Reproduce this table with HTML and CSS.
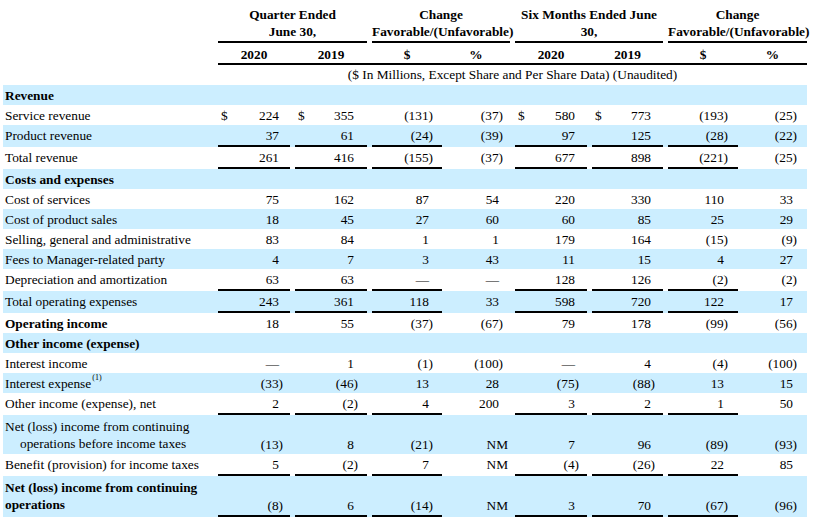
FILE: index.html
```html
<!DOCTYPE html>
<html lang="en">
<head>
<meta charset="utf-8">
<title>Results of Operations</title>
<link rel="stylesheet" href="styles.css">
</head>
<body>
<div class="wrap">
<table class="fin">
  <colgroup>
    <col class="w-lbl"><col class="w-a"><col class="w-b"><col class="w-c"><col class="w-d"><col class="w-e"><col class="w-f"><col class="w-g"><col class="w-h">
  </colgroup>
  <thead>
    <tr class="h1">
      <th class="lbl"></th>
      <th colspan="2" class="grp gap">Quarter Ended<br>June 30,</th>
      <th colspan="2" class="grp gap">Change<br>Favorable/(Unfavorable)</th>
      <th colspan="2" class="grp gap">Six Months Ended June<br>30,</th>
      <th colspan="2" class="grp">Change<br>Favorable/(Unfavorable)</th>
    </tr>
    <tr class="h2">
      <th class="lbl"></th>
      <th class="yr gap">2020</th>
      <th class="yr gap">2019</th>
      <th class="yr">$</th>
      <th class="yr gap">%</th>
      <th class="yr gap">2020</th>
      <th class="yr gap">2019</th>
      <th class="yr">$</th>
      <th class="yr">%</th>
    </tr>
    <tr class="h3">
      <th class="lbl"></th>
      <th colspan="8" class="sub">($ In Millions, Except Share and Per Share Data) (Unaudited)</th>
    </tr>
  </thead>
  <tbody>
    <tr class="s"><td class="lbl b">Revenue</td><td></td><td></td><td></td><td></td><td></td><td></td><td></td><td></td></tr>
    <tr><td class="lbl">Service revenue</td><td><span class="cur">$</span>224</td><td><span class="cur">$</span>355</td><td class="ng">(131)</td><td class="ng">(37)</td><td><span class="cur">$</span>580</td><td><span class="cur">$</span>773</td><td class="ng">(193)</td><td class="ng">(25)</td></tr>
    <tr class="s ul"><td class="lbl">Product revenue</td><td class="u">37</td><td class="u">61</td><td class="u ng">(24)</td><td class="ng">(39)</td><td class="u">97</td><td class="u">125</td><td class="u ng">(28)</td><td class="ng">(22)</td></tr>
    <tr class="ul"><td class="lbl">Total revenue</td><td class="u">261</td><td class="u">416</td><td class="u ng">(155)</td><td class="ng">(37)</td><td class="u">677</td><td class="u">898</td><td class="u ng">(221)</td><td class="ng">(25)</td></tr>
    <tr class="s"><td class="lbl b">Costs and expenses</td><td></td><td></td><td></td><td></td><td></td><td></td><td></td><td></td></tr>
    <tr><td class="lbl">Cost of services</td><td>75</td><td>162</td><td>87</td><td>54</td><td>220</td><td>330</td><td>110</td><td>33</td></tr>
    <tr class="s"><td class="lbl">Cost of product sales</td><td>18</td><td>45</td><td>27</td><td>60</td><td>60</td><td>85</td><td>25</td><td>29</td></tr>
    <tr><td class="lbl">Selling, general and administrative</td><td>83</td><td>84</td><td>1</td><td>1</td><td>179</td><td>164</td><td class="ng">(15)</td><td class="ng">(9)</td></tr>
    <tr class="s"><td class="lbl">Fees to Manager-related party</td><td>4</td><td>7</td><td>3</td><td>43</td><td>11</td><td>15</td><td>4</td><td>27</td></tr>
    <tr class="ul"><td class="lbl">Depreciation and amortization</td><td class="u">63</td><td class="u">63</td><td class="u">—</td><td>—</td><td class="u">128</td><td class="u">126</td><td class="u ng">(2)</td><td class="ng">(2)</td></tr>
    <tr class="s ul"><td class="lbl">Total operating expenses</td><td class="u">243</td><td class="u">361</td><td class="u">118</td><td>33</td><td class="u">598</td><td class="u">720</td><td class="u">122</td><td>17</td></tr>
    <tr><td class="lbl b">Operating income</td><td>18</td><td>55</td><td class="ng">(37)</td><td class="ng">(67)</td><td>79</td><td>178</td><td class="ng">(99)</td><td class="ng">(56)</td></tr>
    <tr class="s"><td class="lbl b">Other income (expense)</td><td></td><td></td><td></td><td></td><td></td><td></td><td></td><td></td></tr>
    <tr><td class="lbl">Interest income</td><td>—</td><td>1</td><td class="ng">(1)</td><td class="ng">(100)</td><td>—</td><td>4</td><td class="ng">(4)</td><td class="ng">(100)</td></tr>
    <tr class="s"><td class="lbl">Interest expense<sup class="fn">(1)</sup></td><td class="ng">(33)</td><td class="ng">(46)</td><td>13</td><td>28</td><td class="ng">(75)</td><td class="ng">(88)</td><td>13</td><td>15</td></tr>
    <tr class="ul"><td class="lbl">Other income (expense), net</td><td class="u">2</td><td class="u ng">(2)</td><td class="u">4</td><td>200</td><td class="u">3</td><td class="u">2</td><td class="u">1</td><td>50</td></tr>
    <tr class="s dbl"><td class="lbl hang">Net (loss) income from continuing operations before income taxes</td><td class="ng">(13)</td><td>8</td><td class="ng">(21)</td><td class="nm">NM</td><td>7</td><td>96</td><td class="ng">(89)</td><td class="ng">(93)</td></tr>
    <tr class="ul"><td class="lbl">Benefit (provision) for income taxes</td><td class="u">5</td><td class="u ng">(2)</td><td class="u">7</td><td class="nm">NM</td><td class="u ng">(4)</td><td class="u ng">(26)</td><td class="u">22</td><td>85</td></tr>
    <tr class="s dbl ul"><td class="lbl b">Net (loss) income from continuing operations</td><td class="u ng">(8)</td><td class="u">6</td><td class="u ng">(14)</td><td class="nm">NM</td><td class="u">3</td><td class="u">70</td><td class="u ng">(67)</td><td class="ng">(96)</td></tr>
  </tbody>
</table>
</div>
</body>
</html>
```

FILE: styles.css
```css
html, body {
  margin: 0;
  padding: 0;
  background: #ffffff;
}

body {
  font-family: "Liberation Serif", "Times New Roman", Times, serif;
  font-size: 13.33px;
  color: #000000;
}

.wrap {
  padding: 6px 7px 0 3px;
}

.fin {
  border-collapse: collapse;
  table-layout: fixed;
  width: 804px;
}

.w-lbl { width: 215px; }
.w-a { width: 77px; }
.w-b { width: 77px; }
.w-c { width: 70px; }
.w-d { width: 73px; }
.w-e { width: 77px; }
.w-f { width: 76px; }
.w-g { width: 70px; }
.w-h { width: 69px; }

/* header */
th {
  padding: 0;
  font-weight: bold;
  text-align: center;
  white-space: nowrap;
  vertical-align: bottom;
}

.h1 th {
  line-height: 17px;
  padding-bottom: 3px;
}

.h1 .grp {
  background: linear-gradient(#000, #000) left bottom / 100% 2px no-repeat;
}

.h1 .grp.gap {
  background-size: calc(100% - 5px) 2px;
}

.gap {
  padding-right: 5px;
}

.h2 th {
  line-height: 15px;
  padding-top: 4px;
  padding-bottom: 3px;
}

.h2 .yr {
  background: linear-gradient(#000, #000) left bottom / 100% 2px no-repeat;
}

.h3 th {
  line-height: 15px;
  padding-top: 2px;
  padding-bottom: 3px;
}

.h3 .sub {
  font-weight: normal;
}

/* body rows */
td {
  --pr: 14px;
  padding: 3px var(--pr) 2px 0;
  line-height: 15px;
  text-align: right;
  white-space: nowrap;
  vertical-align: bottom;
}

td:nth-child(2) { --pr: 16px; }
td:nth-child(3) { --pr: 18px; }
td:nth-child(4) { --pr: 13px; }
td:nth-child(5) { --pr: 16px; }
td:nth-child(6) { --pr: 17px; }
td:nth-child(7) { --pr: 17px; }
td:nth-child(8) { --pr: 14px; }
td:nth-child(9) { --pr: 14px; }

td.ng {
  padding-right: calc(var(--pr) - 4px);
}

td.nm {
  padding-right: calc(var(--pr) - 9px);
}

td.lbl {
  padding-left: 2px;
  padding-right: 0;
  text-align: left;
  white-space: normal;
}

.b {
  font-weight: bold;
}

.s {
  background: #cceeff;
}

.ul td {
  padding-bottom: 4px;
}

td.u {
  background: linear-gradient(#000, #000) left bottom / calc(100% - 5px) 2px no-repeat;
}

td:nth-child(4).u,
td:nth-child(8).u {
  background-size: 100% 2px;
}

.dbl td.lbl {
  line-height: 17px;
}

.hang {
  padding-left: 17px !important;
  text-indent: -15px;
}

.cur {
  float: left;
  margin-left: 3px;
}

.fn {
  font-size: 8px;
  line-height: 0;
  vertical-align: 8px;
  margin-left: 1px;
}
```
